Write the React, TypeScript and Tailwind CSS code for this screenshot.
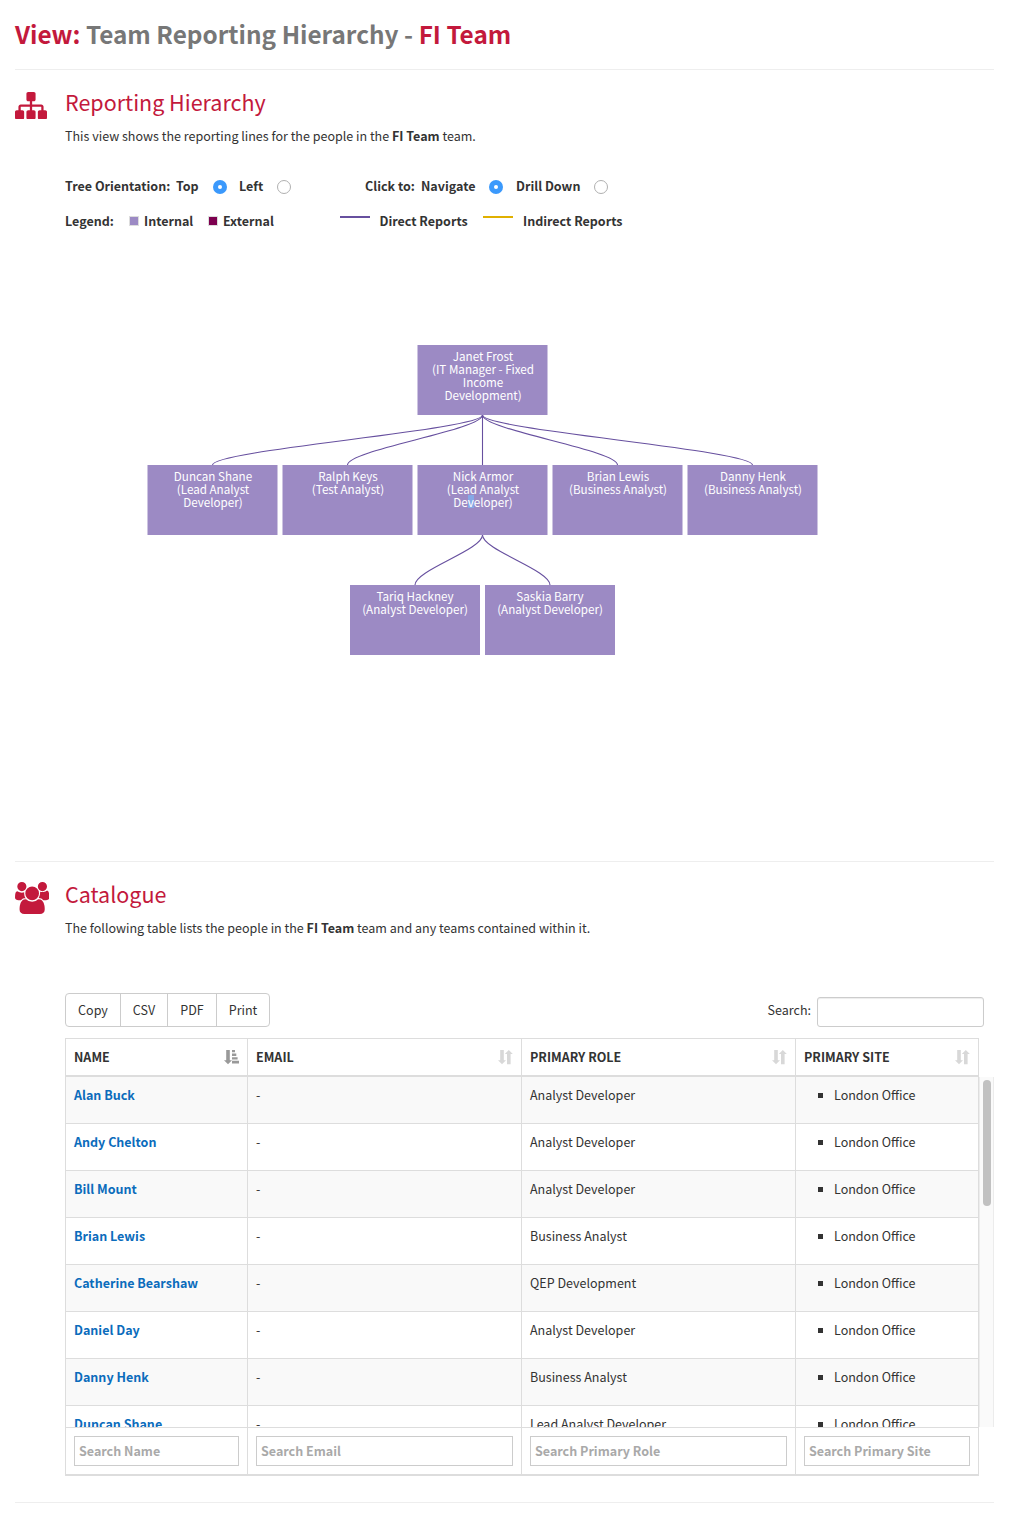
import type { ReactNode } from 'react';

const SITEMAP =
  'M1792 1248v320q0 40-28 68t-68 28h-320q-40 0-68-28t-28-68v-320q0-40 28-68t68-28h96v-192h-512v192h96q40 0 68 28t28 68v320q0 40-28 68t-68 28h-320q-40 0-68-28t-28-68v-320q0-40 28-68t68-28h96v-192h-512v192h96q40 0 68 28t28 68v320q0 40-28 68t-68 28h-320q-40 0-68-28t-28-68v-320q0-40 28-68t68-28h96v-192q0-52 38-90t90-38h512v-192h-96q-40 0-68-28t-28-68v-320q0-40 28-68t68-28h320q40 0 68 28t28 68v320q0 40-28 68t-68 28h-96v192h512q52 0 90 38t38 90v192h96q40 0 68 28t28 68z';
const USERS =
  'M593 896q-162 5-265 128h-134q-82 0-138-40.5t-56-118.5q0-353 124-353 6 0 43.5 21t97.5 42.5 119 21.5q67 0 133-23-5 37-5 66 0 159 81 290zm1071 637q0 120-73 189.5t-194 69.5h-874q-121 0-194-69.5t-73-189.5q0-53 3.5-103.5t14-109 26.5-108.5 43-97.5 62-81 85.5-53.5 111.5-20q10 0 43 21.5t73 48 107 48 135 21.5 135-21.5 107-48 73-48 43-21.5q61 0 111.5 20t85.5 53.5 62 81 43 97.5 26.5 108.5 14 109 3.5 103.5zm-1024-1277q0 106-75 181t-181 75-181-75-75-181 75-181 181-75 181 75 75 181zm704 384q0 159-112.5 271.5t-271.5 112.5-271.5-112.5-112.5-271.5 112.5-271.5 271.5-112.5 271.5 112.5 112.5 271.5zm576 225q0 78-56 118.5t-138 40.5h-134q-103-123-265-128 81-131 81-290 0-29-5-66 66 23 133 23 59 0 119-21.5t97.5-42.5 43.5-21q124 0 124 353zm-128-609q0 106-75 181t-181 75-181-75-75-181 75-181 181-75 181 75 75 181z';

function Radio({ checked = false }: { checked?: boolean }) {
  return checked ? (
    <span className="flex size-[14px] shrink-0 items-center justify-center rounded-full bg-[#3b99fc]">
      <span className="size-1 rounded-full bg-white" />
    </span>
  ) : (
    <span className="block size-[14px] shrink-0 rounded-full border border-[#b0b0b0] bg-white" />
  );
}

function Section({ icon, title, children, className }: { icon: ReactNode; title: string; children: ReactNode; className: string }) {
  return (
    <section className={`flex border-b border-[#eeeeee] ${className}`}>
      <div className="w-[50px] shrink-0">{icon}</div>
      <div className="min-w-0 flex-1 pt-[17px]">
        <h2 className="text-[21.5px] leading-[30px] text-[#c3193c]">{title}</h2>
        {children}
      </div>
    </section>
  );
}

type Person = { x: number; y: number; lines: ReactNode[] };

const people: Person[] = [
  { x: 482.5, y: 345, lines: ['Janet Frost', '(IT Manager - Fixed', 'Income', 'Development)'] },
  { x: 212.5, y: 465, lines: ['Duncan Shane', '(Lead Analyst', 'Developer)'] },
  { x: 347.5, y: 465, lines: ['Ralph Keys', '(Test Analyst)'] },
  {
    x: 482.5,
    y: 465,
    lines: [
      'Nick Armor',
      '(Lead Analyst',
      <>
        De<span className="inline-block h-[13px] bg-[#85a8e6] align-top">v</span>eloper)
      </>,
    ],
  },
  { x: 617.5, y: 465, lines: ['Brian Lewis', '(Business Analyst)'] },
  { x: 752.5, y: 465, lines: ['Danny Henk', '(Business Analyst)'] },
  { x: 415, y: 585, lines: ['Tariq Hackney', '(Analyst Developer)'] },
  { x: 550, y: 585, lines: ['Saskia Barry', '(Analyst Developer)'] },
];

const links = [
  [482.5, 415, 212.5],
  [482.5, 415, 347.5],
  [482.5, 415, 482.5],
  [482.5, 415, 617.5],
  [482.5, 415, 752.5],
  [482.5, 535, 415],
  [482.5, 535, 550],
];

const OX = 65;
const OY = 231;

function Tree() {
  return (
    <div className="relative h-[630px]">
      <svg className="absolute inset-0" width="929" height="630" viewBox={`${OX} ${OY} 929 630`} fill="none" stroke="#67509f" strokeWidth="1.1">
        {links.map(([x, y, tx]) => (
          <path key={`${y}-${tx}`} d={`M${x} ${y}C${x} ${y + 15} ${tx} ${y + 35} ${tx} ${y + 50}`} />
        ))}
      </svg>
      {people.map((p) => {
        const half = p.x % 1 !== 0;
        return (
          <div
            key={`${p.x}-${p.y}`}
            className={`absolute h-[70px] bg-[#9c8ac4] bg-clip-padding pt-1 text-center text-[11.65px] leading-[13px] text-white ${half ? 'w-[131px] border-x border-[#cdc4e1] pl-px' : 'w-[130px]'}`}
            style={{ left: Math.floor(p.x - 65) - OX, top: p.y - OY }}
          >
            {p.lines.map((l, i) => (
              <div key={i} className="h-[13px] whitespace-nowrap">
                {l}
              </div>
            ))}
          </div>
        );
      })}
    </div>
  );
}

const COLS = 'grid-cols-[182px_274px_274px_183px]';

function SortIcon({ sorted = false }: { sorted?: boolean }) {
  return (
    <svg width="15" height="15" viewBox="0 0 15 15" fill={sorted ? '#999999' : '#d8d8d8'}>
      <path d="M2.2 0h3.6v10.3h2.2L4 14.3 0 10.3h2.2z" />
      {sorted ? (
        <path d="M8 0h3v2.3H8zM8 3.6h4.3v2.4H8zM8 7.2h5.6v2.4H8zM8 10.8h7v2.6H8z" />
      ) : (
        <path d="M9 14.2h3.6V4h2.2L10.8 0 6.8 4H9z" />
      )}
    </svg>
  );
}

const rows = [
  ['Alan Buck', 'Analyst Developer'],
  ['Andy Chelton', 'Analyst Developer'],
  ['Bill Mount', 'Analyst Developer'],
  ['Brian Lewis', 'Business Analyst'],
  ['Catherine Bearshaw', 'QEP Development'],
  ['Daniel Day', 'Analyst Developer'],
  ['Danny Henk', 'Business Analyst'],
  ['Duncan Shane', 'Lead Analyst Developer'],
];

const headers = ['NAME', 'EMAIL', 'PRIMARY ROLE', 'PRIMARY SITE'];
const filters = ['Search Name', 'Search Email', 'Search Primary Role', 'Search Primary Site'];

function Catalogue() {
  return (
    <>
      <div className="mt-[55px] flex h-[34px] justify-between pr-[10px]">
        <div className="flex rounded border border-[#cccccc] leading-8">
          <button className="w-[55px] border-r border-[#cccccc]">Copy</button>
          <button className="w-[47px] border-r border-[#cccccc]">CSV</button>
          <button className="w-[49px] border-r border-[#cccccc]">PDF</button>
          <button className="w-[52px]">Print</button>
        </div>
        <label className="flex gap-[6px] leading-[34px]">
          Search:
          <input className="mt-1 h-[30px] w-[167px] rounded-[3px] border border-[#cccccc] shadow-[inset_0_1px_1px_rgba(0,0,0,0.075)]" />
        </label>
      </div>

      <div className="mt-[11px] w-[914px] border-l border-[#dddddd]">
        <div className={`grid h-[39px] border-t border-b-2 border-[#dddddd] ${COLS}`}>
          {headers.map((h, i) => (
            <div key={h} className="flex items-center justify-between border-r border-[#dddddd] pr-2 pl-2 font-bold">
              <span className="leading-5">{h}</span>
              <SortIcon sorted={i === 0} />
            </div>
          ))}
        </div>
      </div>

      <div className="flex h-[350px] w-[929px]">
        <div className="w-[914px] overflow-hidden border-l border-[#dddddd]">
          {rows.map(([name, role], i) => (
            <div key={name} className={`grid h-[47px] border-b border-[#dddddd] leading-5 ${COLS} ${i % 2 ? 'bg-white' : 'bg-[#f9f9f9]'}`}>
              <div className="border-r border-[#dddddd] px-2 pt-2 font-bold text-[#0b6cbc]">{name}</div>
              <div className="border-r border-[#dddddd] px-2 pt-2">-</div>
              <div className="border-r border-[#dddddd] px-2 pt-2">{role}</div>
              <div className="flex border-r border-[#dddddd] pt-2 pl-[22px]">
                <span className="mt-[8px] mr-[11px] size-[5px] bg-[#333333]" />
                London Office
              </div>
            </div>
          ))}
        </div>
        <div className="w-[15px] border-x border-[#ececec] bg-[#fafafa] pt-[3px] pl-[3px]">
          <div className="h-[126px] w-2 rounded-full bg-[#c1c1c1]" />
        </div>
      </div>

      <div className="w-[914px] border-l border-[#dddddd]">
        <div className={`grid h-[49px] border-t border-b-2 border-[#dddddd] ${COLS}`}>
          {filters.map((f) => (
            <div key={f} className="border-r border-[#dddddd] px-2 pt-2">
              <input
                placeholder={f}
                className="block h-[30px] w-full border border-[#cccccc] px-1 pb-[2px] font-bold placeholder:text-[#a9a9a9] placeholder:opacity-100"
              />
            </div>
          ))}
        </div>
      </div>
    </>
  );
}

export default function App() {
  return (
    <main className="h-[1533px] overflow-hidden bg-white px-[15px] font-['Noto_Sans_CJK_SC',sans-serif] text-[12.52px] leading-5 text-[#333333]">
      <header className="h-[70px] border-b border-[#eeeeee] pt-[14px]">
        <h1 className="text-[24.35px] leading-10 font-bold whitespace-nowrap text-[#c3193c]">
          View: <span className="text-[#777777]">Team Reporting Hierarchy - </span>FI Team
        </h1>
      </header>

      <Section
        title="Reporting Hierarchy"
        className="h-[792px] w-[979px]"
        icon={
          <svg className="mt-[22px]" width="32" height="27.43" viewBox="0 128 1792 1536" fill="#c3193c">
            <path d={SITEMAP} />
          </svg>
        }
      >
        <p className="mt-[9px]">
          This view shows the reporting lines for the people in the <b>FI Team</b> team.
        </p>
        <div className="mt-[30px] flex h-5 font-bold">
          <span className="w-[111px]">Tree Orientation:</span>
          <span className="w-[37px]">Top</span>
          <span className="w-[26px] pt-1"><Radio checked /></span>
          <span className="w-[38px]">Left</span>
          <span className="w-[88px] pt-1"><Radio /></span>
          <span className="w-[56px]">Click to:</span>
          <span className="w-[68px]">Navigate</span>
          <span className="w-[27px] pt-1"><Radio checked /></span>
          <span className="w-[78px]">Drill Down</span>
          <span className="pt-1"><Radio /></span>
        </div>
        <div className="mt-[15px] flex h-5 font-bold">
          <span className="w-[64px]">Legend:</span>
          <span className="mt-[5px] mr-[5px] size-[10px] border border-[#dddddd] bg-[#9c8ac4]" />
          <span className="w-[64px]">Internal</span>
          <span className="mt-[5px] mr-[5px] size-[10px] border border-[#dddddd] bg-[#7d004f]" />
          <span className="w-[117px]">External</span>
          <span className="mt-[5px] mr-[9.5px] h-[2px] w-[30px] bg-[#67509f]" />
          <span className="w-[103.5px]">Direct Reports</span>
          <span className="mt-[5px] mr-[10px] h-[2px] w-[30px] bg-[#e0b000]" />
          <span>Indirect Reports</span>
        </div>
        <Tree />
      </Section>

      <Section
        title="Catalogue"
        className="h-[641px] w-[979px]"
        icon={
          <svg className="mt-[19.7px]" width="34.3" height="32" viewBox="0 0 1920 1792" fill="#c3193c">
            <path d={USERS} />
          </svg>
        }
      >
        <p className="mt-[9px]">
          The following table lists the people in the <b>FI Team</b> team and any teams contained within it.
        </p>
        <Catalogue />
      </Section>
    </main>
  );
}
